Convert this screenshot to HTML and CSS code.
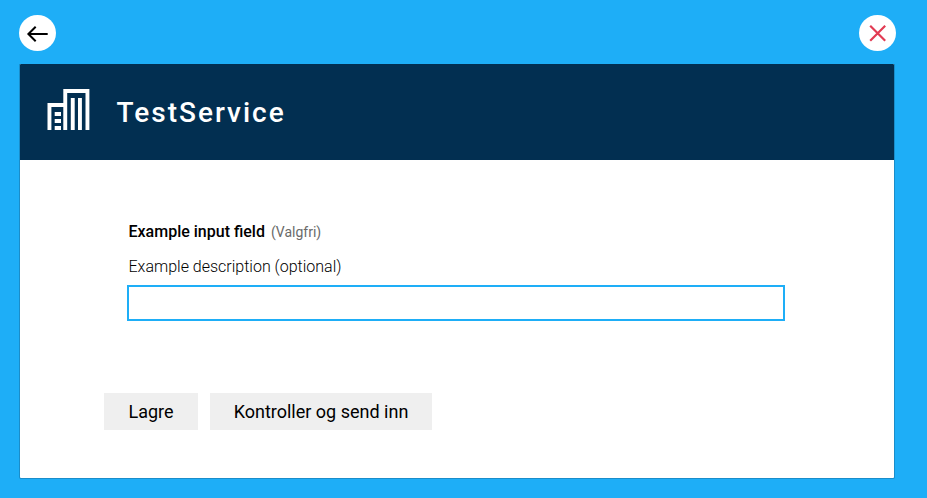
FILE: index.html
```html
<!DOCTYPE html>
<html lang="nb">
<head>
<meta charset="utf-8">
<title>TestService</title>
<link rel="stylesheet" href="styles.css">
</head>
<body>
<nav class="topbar">
  <button class="round" aria-label="Tilbake">
    <svg width="37" height="37" viewBox="0 0 37 37"><path class="arrow" d="M28.7 19H9M16.7 11.8L9.4 19l7.3 7.2"/></svg>
  </button>
  <button class="round" aria-label="Lukk">
    <svg width="37" height="37" viewBox="0 0 37 37"><path class="cross" d="M11.2 10.7l15 15M26.2 10.7l-15 15"/></svg>
  </button>
</nav>
<main class="card">
  <header class="header">
    <svg class="building" width="43" height="41" viewBox="0 0 43 41">
      <path d="M.5 41V14H16.3V0H42.4V41H38.5V4H20.2V41H16.3V18H4.4V41ZM7.7 23H14V27H7.7ZM7.7 30H14V34H7.7ZM7.7 37H14V41H7.7ZM23.8 9H27.7V41H23.8ZM31 9H34.9V41H31Z"/>
    </svg>
    <h1 class="title">TestService</h1>
  </header>
  <form class="form">
    <div class="field">
      <label class="label" for="example">Example input field <span class="optional">(Valgfri)</span></label>
      <p class="description">Example description (optional)</p>
      <input class="input" id="example" type="text">
    </div>
    <div class="actions">
      <button class="button save" type="button">Lagre</button>
      <button class="button send" type="button">Kontroller og send inn</button>
    </div>
  </form>
</main>
</body>
</html>
```
FILE: styles.css
```css
* { box-sizing: border-box; }
body {
  margin: 0;
  height: 498px;
  overflow: hidden;
  background: #1eaef7;
  font-family: Roboto, "Liberation Sans", sans-serif;
  color: #000;
}
.topbar {
  display: flex;
  justify-content: space-between;
  height: 64px;
  padding: 15px 31px 0 19px;
}
.round {
  width: 37px;
  height: 36px;
  padding: 0;
  border: 0;
  border-radius: 50%;
  background: #fff;
}
.round svg { display: block; }
.arrow, .cross { fill: none; stroke: #000; stroke-width: 2; }
.cross { stroke: #e23b53; stroke-width: 2.2; }
.card {
  width: 874px;
  height: 414px;
  margin-left: 20px;
  background: #fff;
  border-radius: 1px;
  box-shadow: 0 0 0 1px #1a8dca;
  clip-path: inset(0 -1px -1px -1px);
}
.header {
  display: flex;
  align-items: center;
  height: 96px;
  padding-left: 27px;
  background: #022f51;
  border-radius: 1px 1px 0 0;
}
.building { fill: #fff; margin-top: -5px; }
.title {
  margin: 2px 0 0 26.5px;
  color: #fff;
  font-size: 28px;
  font-weight: 500;
  line-height: 36px;
  letter-spacing: 2px;
}
.form { padding: 60px 109px 0 84px; }
.field { padding-left: 23px; }
.label {
  display: block;
  padding-left: 1.5px;
  font-size: 16px;
  font-weight: 500;
  line-height: 24px;
}
.optional {
  margin-left: 2px;
  color: #6a6a6a;
  font-size: 14px;
  font-weight: 400;
}
.description {
  margin: 11px 0 6px 1.5px;
  font-size: 16px;
  font-weight: 300;
  line-height: 24px;
}
.input {
  display: block;
  width: 658px;
  height: 36px;
  border: 2px solid #1eaef7;
  border-radius: 0;
  background: #fff;
  outline: 0;
}
.actions {
  display: flex;
  gap: 12px;
  margin-top: 72px;
}
.button {
  height: 37px;
  padding: 0;
  border: 0;
  background: #efefef;
  color: #000;
  font: 400 18px/37px Roboto, sans-serif;
}
.save { width: 94px; }
.send { width: 222px; }
```
